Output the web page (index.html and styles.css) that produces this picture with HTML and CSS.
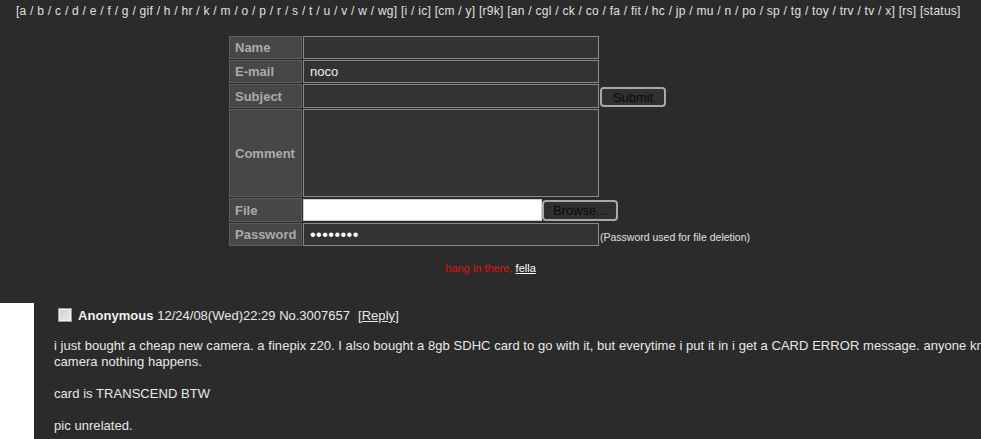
FILE: index.html
```html
<!DOCTYPE html>
<html>
<head>
<meta charset="utf-8">
<link rel="stylesheet" href="styles.css">
</head>
<body>
<div class="nav">[a / b / c / d / e / f / g / gif / h / hr / k / m / o / p / r / s / t / u / v / w / wg] [i / ic] [cm / y] [r9k] [an / cgl / ck / co / fa / fit / hc / jp / mu / n / po / sp / tg / toy / trv / tv / x] [rs] [status]</div>

<form class="postform">
  <div class="label">Name</div>
  <div class="field"><input class="txt" type="text"></div>
  <div class="extra"></div>

  <div class="label">E-mail</div>
  <div class="field"><input class="txt" type="text" value="noco"></div>
  <div class="extra"></div>

  <div class="label">Subject</div>
  <div class="field"><input class="txt" type="text"></div>
  <div class="extra"><button class="btn submit" type="button">Submit</button></div>

  <div class="label">Comment</div>
  <div class="field"><textarea class="txt area"></textarea></div>
  <div class="extra"></div>

  <div class="label">File</div>
  <div class="field filefield"><span class="filebox"></span><button class="btn browse" type="button">Browse...</button></div>

  <div class="label">Password</div>
  <div class="field"><input class="txt pass" type="password" value="abcdefgh"></div>
  <div class="extra hint">(Password used for file deletion)</div>
</form>

<div class="motd"><span class="red">hang in there,</span> <a class="fella" href="#">fella</a></div>

<div class="thread">
  <div class="thumb"></div>
  <div class="post">
    <div class="head"><span class="check"></span><span class="name">Anonymous</span> <span class="date">12/24/08(Wed)22:29 No.3007657</span><span class="reply">[<a href="#">Reply</a>]</span></div>
    <div class="body"><span class="line">i just bought a cheap new camera. a finepix z20. I also bought a 8gb SDHC card to go with it, but everytime i put it in i get a CARD ERROR message. anyone know what to do? when i put it in the</span><br>camera nothing happens.<br><br>card is TRANSCEND BTW<br><br>pic unrelated.</div>
  </div>
</div>
</body>
</html>
```

FILE: styles.css
```css
html, body {
  margin: 0;
  padding: 0;
  background: #2b2b2b;
  overflow: hidden;
}
body {
  font-family: "Liberation Sans", Arial, sans-serif;
  color: #e6e6e6;
  width: 981px;
  height: 439px;
}
.nav {
  font-size: 12px;
  line-height: 15px;
  padding: 4px 0 0 16px;
  color: #e0e0e0;
  letter-spacing: 0.26px;
  white-space: nowrap;
}
.postform {
  display: grid;
  grid-template-columns: 73px 296px 153px;
  grid-template-rows: 23px 23px 24px 88px 24px 23px;
  column-gap: 1px;
  row-gap: 1px;
  width: 523px;
  margin: 17px auto 0;
}
.label {
  box-sizing: border-box;
  background: #474747;
  border: 1px solid #5e5e5e;
  color: #ababab;
  font-weight: bold;
  font-size: 13px;
  padding-left: 5px;
  display: flex;
  align-items: center;
}
.field {
  display: flex;
}
.txt {
  box-sizing: border-box;
  width: 296px;
  height: 100%;
  margin: 0;
  background: #333333;
  border: 1px solid #8a8a8a;
  color: #f0f0f0;
  font-family: "Liberation Sans", Arial, sans-serif;
  font-size: 13px;
  padding: 0 6px;
  outline: none;
}
.area {
  resize: none;
  height: 88px;
}
.pass {
  font-size: 16px;
  letter-spacing: 0.5px;
  color: #ffffff;
}
.extra {
  display: flex;
  align-items: flex-start;
}
.btn {
  box-sizing: border-box;
  margin: 0;
  padding: 0;
  background: #303030;
  border: 2px solid #a8a8a8;
  border-radius: 4px;
  color: #0a0a0a;
  font-family: "Liberation Sans", Arial, sans-serif;
  font-size: 13px;
  line-height: 15px;
}
.submit {
  width: 66px;
  height: 20px;
  margin-top: 3px;
}
.filefield {
  grid-column: 2 / 4;
  align-items: stretch;
}
.filebox {
  display: block;
  width: 239px;
  height: 22px;
  background: #ffffff;
  box-sizing: border-box;
  border: 1px solid #cfcfcf;
  margin-top: 1px;
}
.browse {
  width: 76px;
  height: 21px;
  margin-top: 2px;
}
.hint {
  font-size: 10.5px;
  color: #e0e0e0;
  align-items: center;
  padding-top: 4px;
  box-sizing: border-box;
  white-space: nowrap;
}
.motd {
  text-align: center;
  font-size: 11px;
  margin-top: 16px;
  line-height: 12px;
}
.red {
  color: #e01010;
}
.fella {
  color: #ffffff;
}
.thread {
  display: flex;
  margin-top: 18px;
  height: 200px;
}
.thumb {
  width: 34px;
  flex: none;
  background: #ffffff;
  margin-top: 11px;
}
.post {
  padding-left: 20px;
  font-size: 13px;
  line-height: 16px;
  color: #e8e8e8;
  letter-spacing: 0.05px;
}
.head {
  line-height: 20px;
  margin-top: 14px;
  white-space: nowrap;
}
.check {
  display: inline-block;
  box-sizing: border-box;
  width: 14px;
  height: 14px;
  margin-left: 4px;
  margin-right: 6px;
  vertical-align: -2px;
  background: linear-gradient(135deg, #cfcfcf, #eaeaea);
  border: 1px solid #9a9a9a;
  box-shadow: inset 0 0 0 1px #f4f4f4;
}
.name {
  font-weight: bold;
  color: #f0f0f0;
}
.date {
  letter-spacing: 0;
}
.reply {
  margin-left: 8px;
}
.reply a {
  color: #e8e8e8;
}
.body {
  margin-top: 12px;
}
.line {
  white-space: nowrap;
}
```
